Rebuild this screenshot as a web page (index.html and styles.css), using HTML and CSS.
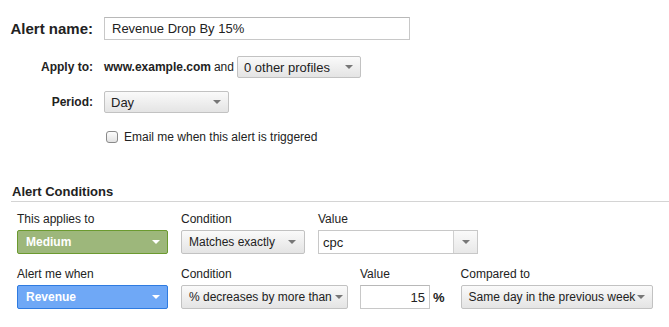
FILE: index.html
```html
<!DOCTYPE html>
<html>
<head>
  <title>Create Alert</title>
  <link rel="stylesheet" href="styles.css">
</head>
<body>
  <div id="alert-form">
    <div class="field-row name-row">
      <label class="field-label name-label">Alert name:</label>
      <div class="text-box name-box">Revenue Drop By 15%</div>
    </div>

    <div class="field-row apply-row">
      <label class="field-label">Apply to:</label>
      <span class="site">www.example.com</span>
      <span class="and">and</span>
      <div class="drop profiles-drop"><span>0 other profiles</span><i class="arrow"></i></div>
    </div>

    <div class="field-row period-row">
      <label class="field-label">Period:</label>
      <div class="drop period-drop"><span>Day</span><i class="arrow"></i></div>
    </div>

    <div class="field-row email-row">
      <span class="check"></span>
      <span class="email-text">Email me when this alert is triggered</span>
    </div>
  </div>

  <div id="conditions">
    <h2>Alert Conditions</h2>

    <div class="cond-row first-row">
      <div class="cond-col">
        <div class="cond-label">This applies to</div>
        <div class="drop dim-drop green"><span>Medium</span><i class="arrow"></i></div>
      </div>
      <div class="cond-col">
        <div class="cond-label">Condition</div>
        <div class="drop match-drop"><span>Matches exactly</span><i class="arrow"></i></div>
      </div>
      <div class="cond-col">
        <div class="cond-label">Value</div>
        <div class="combo"><span class="combo-text">cpc</span><span class="combo-btn"><i class="arrow"></i></span></div>
      </div>
    </div>

    <div class="cond-row second-row">
      <div class="cond-col">
        <div class="cond-label">Alert me when</div>
        <div class="drop dim-drop blue"><span>Revenue</span><i class="arrow"></i></div>
      </div>
      <div class="cond-col">
        <div class="cond-label">Condition</div>
        <div class="drop decrease-drop"><span>% decreases by more than</span><i class="arrow"></i></div>
      </div>
      <div class="cond-col value-col">
        <div class="cond-label">Value</div>
        <div class="value-wrap">
          <div class="text-box value-box">15</div>
          <span class="percent">%</span>
        </div>
      </div>
      <div class="cond-col">
        <div class="cond-label">Compared to</div>
        <div class="drop compare-drop"><span>Same day in the previous week</span><i class="arrow"></i></div>
      </div>
    </div>
  </div>
</body>
</html>
```

FILE: styles.css
```css
body {
  margin: 0;
  font-family: "Liberation Sans", Arial, sans-serif;
  font-size: 13px;
  color: #222;
  background-color: #fff;
}

#alert-form {
  padding: 17px 0 0 0;
}

.field-row {
  display: flex;
  align-items: center;
}

.field-label {
  width: 93px;
  text-align: right;
  font-weight: bold;
  font-size: 12px;
  margin-right: 11px;
  flex-shrink: 0;
}

.name-label {
  font-size: 15px;
}

.text-box {
  box-sizing: border-box;
  border: 1px solid #c8c8c8;
  border-top-color: #b8b8b8;
  background-color: #fff;
  display: flex;
  align-items: center;
}

.name-box {
  width: 306px;
  height: 23px;
  padding-left: 7px;
}

.apply-row {
  margin-top: 16px;
}

.site {
  font-weight: bold;
  font-size: 12px;
}

.and {
  font-size: 12px;
  margin: 0 3px 0 3px;
}

.drop {
  box-sizing: border-box;
  height: 22px;
  border: 1px solid #c2c2c2;
  border-radius: 2px;
  background: linear-gradient(#fafafa, #e4e4e4);
  display: flex;
  align-items: center;
  justify-content: space-between;
  padding: 0 9px 0 6px;
  white-space: nowrap;
  color: #222;
}

.arrow {
  display: inline-block;
  width: 0;
  height: 0;
  border-left: 4px solid transparent;
  border-right: 4px solid transparent;
  border-top: 4px solid #777;
}

.profiles-drop {
  width: 124px;
  padding-right: 7px;
}

.period-row {
  margin-top: 13px;
}

.period-drop {
  width: 125px;
  padding-right: 7px;
}

.email-row {
  margin-top: 17px;
  padding-left: 106px;
}

.check {
  box-sizing: border-box;
  width: 12px;
  height: 12px;
  border: 1px solid #8a8a8a;
  border-radius: 3px;
  background: linear-gradient(#fdfdfd, #e2e2e2);
  margin-right: 6px;
}

.email-text {
  font-size: 12px;
}

#conditions {
  margin-top: 40px;
}

#conditions h2 {
  font-size: 13px;
  margin: 0 0 0 11px;
  padding: 0 0 1px 1px;
  border-bottom: 1px solid #d4d4d4;
  line-height: 16px;
}

.cond-row {
  display: flex;
  align-items: flex-end;
  padding-left: 17px;
  font-size: 12px;
}

.first-row {
  margin-top: 10px;
}

.second-row {
  margin-top: 13px;
  padding-bottom: 18px;
  margin-left: 11px;
  padding-left: 6px;
  border-bottom: 1px solid #d4d4d4;
}

.cond-col {
  margin-right: 13px;
}

.cond-label {
  line-height: 15px;
  margin-bottom: 3px;
}

.cond-row .drop {
  height: 24px;
}

.dim-drop {
  width: 151px;
  font-weight: bold;
  color: #fff;
  padding: 0 7px 0 8px;
}

.dim-drop .arrow {
  border-top-color: #fff;
}

.green {
  background: #9db77b;
  border-color: #6b9a2f;
}

.blue {
  background: #6fa8f6;
  border-color: #2f7be0;
}

.match-drop {
  width: 124px;
  padding-left: 7px;
  padding-right: 8px;
}

.combo {
  box-sizing: border-box;
  width: 160px;
  height: 24px;
  border: 1px solid #c8c8c8;
  display: flex;
  align-items: stretch;
}

.combo-text {
  flex: 1;
  display: flex;
  align-items: center;
  padding-left: 4px;
  font-size: 13px;
}

.combo-btn {
  width: 23px;
  border-left: 1px solid #d0d0d0;
  background: linear-gradient(#fafafa, #e8e8e8);
  display: flex;
  align-items: center;
  justify-content: center;
}

.decrease-drop {
  width: 167px;
  padding-left: 7px;
  padding-right: 4px;
}

.second-row .cond-col:nth-child(2) {
  margin-right: 12px;
}

.value-col {
  margin-right: 15px;
}

.value-wrap {
  display: flex;
  align-items: center;
}

.value-box {
  width: 70px;
  height: 24px;
  justify-content: flex-end;
  padding-right: 4px;
  font-size: 13px;
}

.percent {
  font-weight: bold;
  font-size: 13px;
  margin-left: 3px;
  margin-right: 1px;
}

.compare-drop {
  width: 192px;
  padding-left: 7px;
  padding-right: 7px;
}
```
